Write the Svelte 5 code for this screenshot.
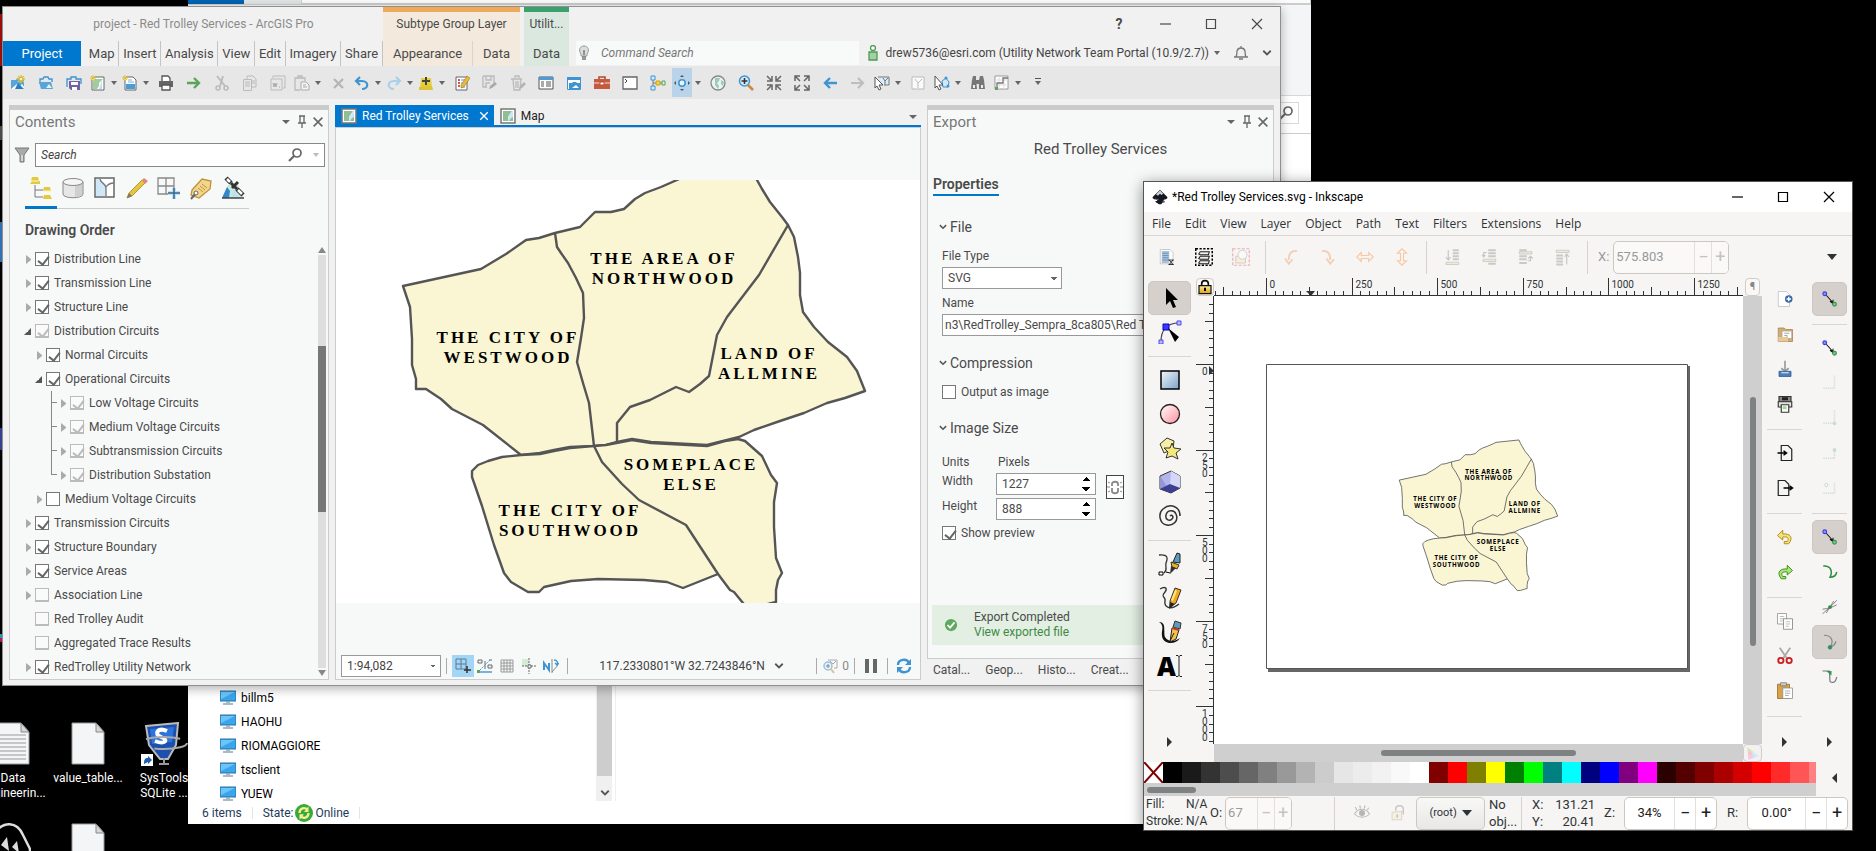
<script>
  // ArcGIS ribbon
  const tabs = ['Map', 'Insert', 'Analysis', 'View', 'Edit', 'Imagery', 'Share'];

  // 16x16 glyphs
  const icons = {
    newProject: '<path d="M1 5h5l1-2h3v2h4v9H1z" fill="#56a5dd"/><path d="M1 14l6-5 3 2 2-2 2 3v2z" fill="#fff"/><path d="M8 8l6 6H5z" fill="#2b7dbb"/><path d="M11 0v8M7 4h8M8 1l6 6M14 1L8 7" stroke="#e3c53f" stroke-width="1.4"/><circle cx="11" cy="4" r="2" fill="#fdf3b5" stroke="#c9a92b"/>',
    open: '<path d="M2 9V4h3l1-2h4l1 2h3v3" fill="none" stroke="#3f92cf" stroke-width="1.3"/><path d="M1 7h12l2 7H3z" fill="#56a5dd"/><path d="M8 13l3-4 3 4z" fill="#e8f3e0"/>',
    saveProject: '<path d="M1 12V4h4V2h5v2h5v5" fill="none" stroke="#3f92cf" stroke-width="1.3"/><path d="M3 6h11v9H5l-2-2z" fill="#6f63a8"/><path d="M5 7h7v3H5zM6 12h5v3H6z" fill="#fff"/>',
    newMap: '<path d="M4 2h10v13H2V5" fill="#fff" stroke="#666"/><path d="M4 4h9l-4 4v3l-2 3H3V7z" fill="#a2cca0"/><path d="M12 5v9H9z" fill="#bfdff3"/><path d="M3 0v6M0 3h6M1 1l4 4M5 1L1 5" stroke="#dfbd31"/>',
    newReport: '<path d="M4 2h7l3 3v10H3V5" fill="#fff" stroke="#666"/><path d="M6 5h4M6 7h6" stroke="#7bb3df"/><path d="M4 9h9v5H4z" fill="#4b9cd6"/><path d="M3 0v6M0 3h6M1 1l4 4M5 1L1 5" stroke="#dfbd31"/>',
    print: '<path d="M4 6V1h6l2 2v3" fill="#fff" stroke="#555" stroke-width="1.3"/><path d="M1 6h14v6h-3v-2H4v2H1z" fill="#666"/><path d="M4 10h8v5H4z" fill="#fff" stroke="#555" stroke-width="1.3"/>',
    go: '<path d="M1 8h12M8 3l5 5-5 5" fill="none" stroke="#5aa55a" stroke-width="2.4"/>',
    cut: '<path d="M3 1l8 10M9 1L6 11" stroke="#b9b9b9" stroke-width="1.8"/><circle cx="4" cy="13" r="2" fill="none" stroke="#b9b9b9" stroke-width="1.5"/><circle cx="12" cy="13" r="2" fill="none" stroke="#b9b9b9" stroke-width="1.5"/>',
    copy: '<path d="M5 4V1h6l3 3v8h-4" fill="none" stroke="#bbb"/><path d="M1.500 4.500h8v11h-8zM3 7h5M3 9h5M3 11h5M10 6h3M10 8h3" fill="none" stroke="#bbb"/>',
    copyPath: '<path d="M3 3V1h12v12h-2M1 4h11v11H1z" fill="none" stroke="#bbb"/><path d="M3 8l1 4 1-4 1 4 1-4M9 12h1" fill="none" stroke="#aaa"/>',
    paste: '<path d="M6 15H1V3h10v3M4 3V1h4v2" fill="none" stroke="#bbb" stroke-width="1.3"/><path d="M7 7h5l3 3v5H7zM9 10h3M9 12h4" fill="#f3f3f3" stroke="#aaa"/>',
    del: '<path d="M4 4l9 9M13 4l-9 9" stroke="#b5b5b5" stroke-width="2.200"/>',
    undo: '<path d="M6 2L2 6l4 4M2 6h6c7 0 7 8 0 8" fill="none" stroke="#3f94d2" stroke-width="2.200"/>',
    redo: '<path d="M10 2l4 4-4 4M14 6H8c-7 0-7 8 0 8" fill="none" stroke="#a9d0ea" stroke-width="2.200"/>',
    addData: '<path d="M3 3h10l1 9c-4-2-7 3-12 2z" fill="#e6cf3c"/><path d="M1 12c4 0 8-3 13-1l1 4H1z" fill="#dfc435"/><path d="M8 2v8M4 6h8" stroke="#444" stroke-width="2"/>',
    attributes: '<path d="M2 2h11v13H2z" fill="#fff" stroke="#666"/><path d="M4 5h2M4 8h2M4 11h2" stroke="#d9534f" stroke-width="2"/><path d="M7 5h4M7 8h3M7 12h4" stroke="#4b9cd6"/><path d="M7 10l6-9 3 2-6 9-3 1z" fill="#e8b93a" stroke="#8b6d24" stroke-width=".5"/>',
    saveEdits: '<path d="M1 1h11v7M1 1v11h4M4 1v4h5V1M4 12V8h4" fill="none" stroke="#bbb" stroke-width="1.4"/><path d="M7 14l1-3 5-4 2 2-5 4z" fill="#aaa"/>',
    discard: '<path d="M1 4h11M3 4l1 11h6l1-11M5 3V1h4v2M6 6v7M8 6v7" fill="none" stroke="#bbb" stroke-width="1.3"/><path d="M9 14l1-3 4-4 2 2-4 4z" fill="#b3b3b3"/>',
    table: '<path d="M1 2h14v12H1z" fill="#fff" stroke="#555"/><path d="M1 2h14v3H1z" fill="#4b9cd6"/><path d="M3 7h3M3 9h3M3 11h3M8 7h5M8 9h5M8 11h5" stroke="#555"/>',
    catalog: '<path d="M1.500 2.500h13v12h-13z" fill="#fff" stroke="#3f94d2"/><path d="M1 2h14v3H1z" fill="#3f94d2"/><path d="M3 8h3l1-1h3l1 1h3v6H3z" fill="#3f94d2"/><path d="M6 13l4-3 3 3z" fill="#fff"/>',
    toolbox: '<path d="M5 4V2h6v2" fill="none" stroke="#b84a2e" stroke-width="1.600"/><path d="M0 4h16v10H0z" fill="#c65a3c"/><path d="M0 8h16" stroke="#f6ded6"/><path d="M6 7h4v3H6z" fill="#fff" stroke="#b84a2e"/>',
    python: '<path d="M1 2h14v12H1z" fill="#fff" stroke="#666" stroke-width="1.3"/><path d="M3 4l2 2-2 2" fill="none" stroke="#444"/>',
    model: '<path d="M3 3v10M3 8h10" stroke="#777"/><path d="M1 1h4v4H1zM1 11h4v4H1z" fill="#d5ecfb" stroke="#3f94d2"/><path d="M6 6h4v4H6z" fill="#f0d23d" stroke="#c8a51d"/><path d="M12 6h3v4h-3z" fill="#d9efd9" stroke="#5aa55a"/>',
    explore: '<circle cx="8" cy="8" r="3.200" fill="#e8f5ff" stroke="#3f94d2" stroke-width="1.500"/><path d="M8 0l2 2H6zM8 16l2-2H6zM0 8l2-2v4zM16 8l-2-2v4z" fill="#555"/>',
    globe: '<circle cx="8" cy="8" r="7" fill="#e6f3fb" stroke="#888" stroke-width="1.300"/><path d="M5 3l5 0-1 3-2 2 2 3-1 3-3-4 0-3z" fill="#9fcbab"/><path d="M11 5l3 2-1 4-2-2z" fill="#9fcbab"/>',
    zoomIn: '<circle cx="6.500" cy="6" r="5" fill="#d5ecfb" stroke="#3f94d2" stroke-width="1.500"/><path d="M6.500 3v6M3.500 6h6" stroke="#333" stroke-width="1.600"/><path d="M10 10l5 5" stroke="#c98a3d" stroke-width="2.600"/>',
    fixedIn: '<path d="M1 1l4 4M6 1v5H1M15 1l-4 4M10 1v5h5M1 15l4-4M1 10h5v5M15 15l-4-4M10 15v-5h5" fill="none" stroke="#666" stroke-width="1.500"/>',
    fixedOut: '<path d="M1 1l5 5M1 6V1h5M15 1l-5 5M10 1h5v5M1 15l5-5M1 10v5h5M15 15l-5-5M10 15h5v-5" fill="none" stroke="#666" stroke-width="1.500"/>',
    prev: '<path d="M15 8H3M8 3L3 8l5 5" fill="none" stroke="#3f94d2" stroke-width="2.400"/>',
    next: '<path d="M1 8h12M8 3l5 5-5 5" fill="none" stroke="#bdbdbd" stroke-width="2.200"/>',
    select: '<path d="M4 2h11v8h-5" fill="#d8eefa" stroke="#777"/><path d="M9 3l2 3 3-3M11 6v4" fill="none" stroke="#777"/><path d="M1 2l8 8H5l2 4-2 1-2-4-2 2z" fill="#fff" stroke="#555"/>',
    clear: '<path d="M2 2h12v12H2z" fill="#fafafa" stroke="#bbb"/><path d="M5 4l3 4 4-4M8 8v5" fill="none" stroke="#bbb"/>',
    trace: '<path d="M8 6l4-3 3 4-1 5H9z" fill="#cfe7f7" stroke="#3f94d2"/><circle cx="12" cy="3" r="1.500" fill="#3f94d2"/><circle cx="14" cy="11" r="1.500" fill="#3f94d2"/><path d="M1 1l8 9H5l2 4-2 1-2-4-2 2z" fill="#fff" stroke="#555"/>',
    locate: '<path d="M3 1h3v4l1 9H1l1-9zM10 1h3l1 4 1 9H9V5zM6 5h4v4H6z" fill="#777"/><path d="M3 10h2v3H3zM11 10h2v3h-2z" fill="#eee"/>',
    chart: '<path d="M1 1h13v13H1z" fill="#fff" stroke="#999"/><path d="M5 1v13M10 1v13M1 5h13M1 10h13" stroke="#ddd"/><path d="M3 13V8h6V3h5" fill="none" stroke="#777" stroke-width="1.300"/><path d="M1 12h3v3H1z" fill="#5aa55a"/>',
    pin: '<path d="M5 2h6M6 2v7M10 2v7M4 9h8M8 9v5" fill="none" stroke="#666" stroke-width="1.300"/>',
    close: '<path d="M3 3l10 10M13 3L3 13" stroke="currentColor" stroke-width="1.800"/>',
    min: '<path d="M3 8h11" stroke="currentColor" stroke-width="1.200"/>',
    max: '<path d="M3.500 3.500h9v9h-9z" fill="none" stroke="currentColor" stroke-width="1.200"/>',
    exit: '<path d="M3 3l10 10M13 3L3 13" stroke="currentColor" stroke-width="1.200"/>',
    filter: '<path d="M1 1h14L10 8v7H6V8z" fill="#aaa" stroke="#777"/><path d="M8 8v6" stroke="#fff"/>',
    search: '<circle cx="10" cy="6" r="4" fill="none" stroke="#666" stroke-width="1.700"/><path d="M7 9l-5 5" stroke="#666" stroke-width="2.200"/>',
    bulb: '<path d="M5 9C2 5 4 1 8 1s6 4 3 8v2H5z" fill="#ddd" stroke="#999"/><path d="M6 12h4M6 14h4M8 5v5" stroke="#777" stroke-width="1.500"/>',
    user: '<circle cx="8" cy="3" r="2.500" fill="#fff" stroke="#4d9a52" stroke-width="1.300"/><path d="M4 7h8v8H4z" fill="#a5cfa7" stroke="#4d9a52" stroke-width="1.300"/>',
    bell: '<path d="M1 12h14M3 12c1-2 1-4 1-6 1-4 7-4 8 0 0 2 0 4 1 6M6 14h4M8 1v2" fill="none" stroke="#777" stroke-width="1.300"/>',
    chevron: '<path d="M3 5l5 5 5-5" fill="none" stroke="#555" stroke-width="2.400"/>',
    map: '<path d="M1 1h14v14H1z" fill="#fff" stroke="#777" stroke-width="1.500"/><path d="M3 3h9l-4 6v4H3z" fill="#8fbf94"/><path d="M12 3h1v10H8V9z" fill="#cde7f6"/><path d="M11 10l2-1v4h-4z" fill="#8fbf94"/>',
    grid: '<path d="M2 2h12v12H2zM5 2v12M8 2v12M11 2v12M2 5h12M2 8h12M2 11h12" fill="none" stroke="#999"/>',
    cells: '<path d="M1 1h10v10H1zM6 1v10M1 6h10" fill="none" stroke="#5b7c93"/><path d="M12 8v7M9 12h7" stroke="#333" stroke-width="1.500"/>',
    snapping: '<path d="M1 2h4v3H1zM12 2h3M11 7h4v3h-4zM8 3v8" fill="none" stroke="#666"/><path d="M3 12L13 2" stroke="#4b9cd6" stroke-dasharray="2 1"/><path d="M1 14h14" stroke="#4b9cd6" stroke-width="1.500"/><path d="M0 12h3v3H0z" fill="#5aa55a"/>',
    crosshair: '<path d="M1 1h7v7H1z" fill="#d7ead5"/><path d="M8 0v16M1 8h15" stroke="#666" stroke-dasharray="2 1"/><path d="M7 7h3v3H7z" fill="#fff" stroke="#666"/>',
    north: '<path d="M1 12V5l5 7V5" fill="none" stroke="#3f94d2" stroke-width="2"/><path d="M9 1v14M9 14l6-7" stroke="#888"/><path d="M11 2c3 0 4 2 3 5M12 5l2 2 2-2" fill="none" stroke="#3f94d2" stroke-width="1.300"/>',
    zoomSel: '<path d="M6 2h9v8h-3M8 3l3 3 3-3" fill="none" stroke="#aaa"/><circle cx="6" cy="8" r="4" fill="#e7f2fa" stroke="#9ac3e0" stroke-width="1.500"/><path d="M6 6v4M4 8h4" stroke="#888"/><path d="M9 11l3 4" stroke="#dfbf93" stroke-width="2"/>',
    pause: '<path d="M2 1h4v14H2zM10 1h4v14h-4z" fill="#666"/>',
    refresh: '<path d="M2 7c0-6 9-7 11-2M14 9c0 6-9 7-11 2" fill="none" stroke="#3f94d2" stroke-width="2.400"/><path d="M15 1v6H9zM1 15V9h6z" fill="#3f94d2"/>',
    link: '<path d="M5 7V5c0-3 6-3 6 0v2M5 9v3c0 3 6 3 6 0V9" fill="none" stroke="#888" stroke-width="1.800"/><path d="M1 3l2 1M0 8h3M1 13l2-1M15 3l-2 1M16 8h-3M15 13l-2-1" stroke="#888"/>',
    ok: '<circle cx="8" cy="8" r="7" fill="#5ea960"/><path d="M4 8l3 3 5-6" fill="none" stroke="#fff" stroke-width="2"/>',
    monitor: '<path d="M0 1h16v10H0z" fill="#37a6ee" stroke="#2a6f9e"/><path d="M1 2h14L1 9z" fill="#6fc4f7"/><path d="M6 12h4M3 14h10" stroke="#8da4b5" stroke-width="1.500"/>',
    online: '<circle cx="8" cy="8" r="8" fill="#3aa935"/><path d="M4 8c0-5 5-5 7-3M12 8c0 5-5 5-7 3" fill="none" stroke="#f4ef9a" stroke-width="2"/><path d="M12 2v5H8zM4 14V9h4z" fill="#f4ef9a"/>'
  };

  // 24x24 glyphs
  const big = {
    byOrder: '<path d="M3 1h6l1 4H2zM3 5h8v3H1zM15 11h6l1 4h-8zM15 19h6l2 4h-9z" fill="#e2ca3c"/><path d="M6 9v12h8M6 14h8" fill="none" stroke="#777"/><path d="M2 5h8M14 15h9" stroke="#f8f4cc"/>',
    bySource: '<path d="M2 6v12c0 5 20 5 20 0V6" fill="#e6e6e6" stroke="#888"/><path d="M14 9v12c5 0 7-1 7-3V6z" fill="#cfcfcf"/><ellipse cx="12" cy="6" rx="10" ry="3.500" fill="#f5f5f5" stroke="#888"/>',
    bySelection: '<path d="M2 2h19v19H2z" fill="#fff" stroke="#666" stroke-width="1.500"/><path d="M3 3h4c1 5 6 4 6 9v8H3z" fill="#cfe7f7"/><path d="M7 3c1 5 6 4 6 9v8M13 11c2-3 5-4 8-4" fill="none" stroke="#777" stroke-width="1.300"/>',
    byEditing: '<path d="M2 22l2-5L17 4l3 3L7 20z" fill="#e3c53f" stroke="#b89a2b"/><path d="M17 4l2-2 4 3-3 3z" fill="#dc8a80"/><path d="M2 22l2-5 3 3z" fill="#777"/>',
    bySnapping: '<path d="M1 2h16v16H1zM9 2v16M1 10h16" fill="none" stroke="#888" stroke-width="1.300"/><path d="M17 12v11M11 17h12" stroke="#bfe0f5" stroke-width="4"/><path d="M17 12v11M11 17h12" stroke="#34668a" stroke-width="1.500"/>',
    byLabel: '<path d="M3 14L13 3l9 2-1 8-11 9-8-3z" fill="#f1d78a" stroke="#c2903f" stroke-width="1.300"/><path d="M11 10l5 4M13 8l5 4M9 12l5 4" stroke="#c2903f"/><path d="M2 23l5-6" stroke="#666" stroke-width="2"/><circle cx="7" cy="17" r="2" fill="#fff" stroke="#666"/>',
    byPerception: '<path d="M1 22L7 9h10l6 13z" fill="#c9e8e0"/><path d="M1 22l5-11 3 4-1 7z" fill="#2f88c9"/><path d="M10 22l3-9 5 9z" fill="#bfdff3"/><path d="M1 22h22" stroke="#444" stroke-width="1.500"/><path d="M5 2l5 5M16 13l6 6" stroke="#333" stroke-width="4.500"/><path d="M6 3l3 3M17 14l4 4" stroke="#fff" stroke-width="2.500"/><path d="M10 7l6 6M11 12l6-6" stroke="#333" stroke-width="3"/>',
    selector: '<path d="M8 2v17l4-4 3 7 3-1-3-7h5z" fill="#000"/>',
    node: '<path d="M3 22C3 10 8 3 21 3" fill="none" stroke="#444" stroke-width="1.200"/><path d="M5 4h6v6H5z" fill="#3a3aff" stroke="#0000c8"/><path d="M19 1h4v4h-4zM1 20h4v4H1z" fill="#b9b9ff" stroke="#4b4bf0"/><path d="M10 8l11 9-4 5z" fill="#000"/>',
    rect: '<path d="M3 3h18v18H3z" fill="url(#blue)" stroke="#000" stroke-width="1.500"/>',
    circle: '<circle cx="12" cy="12" r="9.500" fill="url(#pink)" stroke="#222" stroke-width="1.300"/>',
    star: '<path d="M2 8l7-6 7 3-1 8-9 4z" fill="#f7efa5" stroke="#333"/><path d="M14 7l2 5 7 1-5 4 2 6-6-3-6 2 2-6-4-4h6z" fill="#f5e97e" stroke="#333"/>',
    cube: '<path d="M2 6l11-5 9 5v12l-9 5-11-4z" fill="#b3b6ea" stroke="#333"/><path d="M2 6l8 12-8 1z" fill="#9295d8"/><path d="M13 1l9 5v12l-10-3z" fill="#d5d7f8"/><path d="M12 14l10 4-9 5-11-4z" fill="#3c3f8f"/>',
    spiral: '<path d="M12 12c2-2 4 1 2 3-3 3-7 0-6-4 1-5 8-6 10-1 3 7-3 12-9 11C1 20 0 9 5 5 12-1 22 2 22 12" fill="none" stroke="#333" stroke-width="1.500"/>',
    pen: '<path d="M1 3c9-1 9 3 7 8-1 4 2 7-2 10" fill="none" stroke="#333" stroke-width="1.300"/><path d="M1 20h4v3H1zM8 20l4 1" fill="#fff" stroke="#000"/><path d="M15 10l4-9 3 1v9z" fill="#5b9bbd" stroke="#222"/><path d="M13 10l8 3-2 4-5-2z" fill="#eab21e" stroke="#333"/><path d="M13 14l5 2-6 6z" fill="#333"/>',
    pencil: '<path d="M2 3c5-3 8-1 5 3-5 6 1 4 0 9-1 6 5 10 14 3" fill="none" stroke="#333" stroke-width="1.400"/><path d="M12 15l5-13 6 2-5 13-6 4z" fill="#f3a51d" stroke="#333"/><path d="M13 14l4-10 2 1-4 10z" fill="#ffe77a"/><path d="M12 16l5 2-6 5z" fill="#222"/>',
    calligraphy: '<path d="M1 2c8 0 4 10 6 15 2 4 8 6 15 1-4 7-17 7-18-2C3 10 7 6 1 2z" fill="#111"/><path d="M15 7l2-6 6 2-1 6z" fill="#5b9bbd" stroke="#333"/><path d="M14 8l7 2-3 9-6 3z" fill="#f3c44d" stroke="#222"/><path d="M14 8l7 2" stroke="#c0392b" stroke-width="2"/><path d="M16 13l-4 8" stroke="#222"/>',
    docProps: '<path d="M3 2h13l4 4v15H3z" fill="#fff" stroke="#bbb"/><path d="M5 4h10v16H5z" fill="#a9c3dd"/><path d="M6 7h8M6 10h8M6 13h8M6 16h8" stroke="#5f83a8"/><path d="M14 16h7M14 22h7M15 16l5 6M20 16l-5 6" stroke="#000"/>',
    allLayers: '<path d="M1 1h22v22H1z" fill="none" stroke="#000" stroke-width="2" stroke-dasharray="3 2"/><path d="M5 8l2-3h12l-1 4H7zM5 14l2-3h12l-1 4H7zM5 20l2-3h12l-1 4H7z" fill="#eee" stroke="#222" stroke-width="1.400"/>',
    deselect: '<g opacity=".45"><path d="M1 1h22v22H1z" fill="none" stroke="#e06060" stroke-width="1.600" stroke-dasharray="4 2"/><path d="M5 11h13v9H5z" fill="#f7e6b5" stroke="#888"/><circle cx="14" cy="9" r="6" fill="#fff" stroke="#888"/></g>',
    rotL: '<path d="M20 4C12 3 9 8 9 16M4 14l5 7 5-6" fill="none" stroke="#f3cdb4" stroke-width="2.500"/>',
    rotR: '<path d="M4 4c8-1 11 4 11 12M10 14l5 7 5-6" fill="none" stroke="#f3cdb4" stroke-width="2.500"/>',
    flipH: '<path d="M7 6l-6 6 6 6v-4h10v4l6-6-6-6v4H7z" fill="#fdf3ea" stroke="#f3c9a8" stroke-width="1.500"/>',
    flipV: '<path d="M6 7l6-6 6 6h-4v10h4l-6 6-6-6h4V7z" fill="#fdf3ea" stroke="#f3c9a8" stroke-width="1.500"/>',
    bottom: '<path d="M13 3h8M13 7h8M13 11h8M13 15h8" stroke="#c9c9c7" stroke-width="2.500"/><path d="M4 19h17v3H4z" fill="#ecebdc" stroke="#c4c3ba"/><path d="M7 3v12M4 12l3 4 3-4" fill="none" stroke="#c4c4c4" stroke-width="1.500"/>',
    lower: '<path d="M11 3h10M11 7h10M11 11h10M11 21h10" stroke="#c9c9c7" stroke-width="2.500"/><path d="M4 15h17v3H4z" fill="#ecebdc" stroke="#c4c3ba"/><path d="M9 6H5v5M3 9l2 3 2-3" fill="none" stroke="#c4c4c4" stroke-width="1.500"/>',
    raise: '<path d="M3 3h10M3 11h10M3 15h10M3 20h10" stroke="#c9c9c7" stroke-width="2.500"/><path d="M3 5h17v3H3z" fill="#ecebdc" stroke="#c4c3ba"/><path d="M14 17h4v-5M15 14l3-3 3 3" fill="none" stroke="#c4c4c4" stroke-width="1.500"/>',
    top: '<path d="M3 10h9M3 14h9M3 18h9M3 22h9" stroke="#c9c9c7" stroke-width="2.500"/><path d="M3 3h17v3H3z" fill="#ecebdc" stroke="#c4c3ba"/><path d="M17 22V9M14 12l3-4 3 4" fill="none" stroke="#c4c4c4" stroke-width="1.500"/>',
    newDoc: '<path d="M3 2h11l4 4v16H3z" fill="#fff" stroke="#bbb"/><circle cx="17" cy="12" r="5" fill="#3468a8"/><path d="M17 9v6M14 12h6" stroke="#fff" stroke-width="1.800"/>',
    folder: '<path d="M3 4h8l2 2h9v16H3z" fill="#d0ae7b" stroke="#a68046"/><path d="M8 8h13v10H8z" fill="#fff" stroke="#a9a08d"/><path d="M11 11h7M11 14h4" stroke="#888"/><path d="M3 16h10l3-3v9H3z" fill="#e6c997"/>',
    save: '<path d="M12 1v12M7 11l5 4 5-4" fill="none" stroke="#999" stroke-width="2.200"/><path d="M4 15h16v7H4z" fill="#4a7ebb" stroke="#2f5a8c"/><path d="M7 17h10" stroke="#d7e5f5" stroke-width="1.500"/>',
    printer: '<path d="M4 2h16v7H4z" fill="#888" stroke="#333" stroke-width="1.500"/><path d="M8 3h8v4H8z" fill="#222"/><path d="M3 9h18v7H3z" fill="#e5e5e0" stroke="#333" stroke-width="1.500"/><path d="M7 13h10v10H7z" fill="#fff" stroke="#333" stroke-width="1.500"/><path d="M9 15h5v4H9z" fill="#a5d394"/>',
    importDoc: '<path d="M7 2h9l5 5v15H7z" fill="#f5f5f2" stroke="#222" stroke-width="1.600"/><path d="M2 12h11M10 9l4 3-4 3" fill="none" stroke="#000" stroke-width="2"/>',
    exportDoc: '<path d="M3 2h9l5 5v15H3z" fill="#f5f5f2" stroke="#222" stroke-width="1.600"/><path d="M10 12h11M18 9l4 3-4 3" fill="none" stroke="#000" stroke-width="2"/>',
    undoY: '<path d="M9 3l-7 7 7 6v-4c7-1 9 2 6 6h-4v3h6c7-9 1-14-8-13z" fill="#f6e27c" stroke="#b08d16" stroke-width="1.300"/>',
    redoG: '<path d="M15 3l7 7-7 6v-4c-7-1-9 2-6 6h4v3H7C0 12 6 7 15 8z" fill="#a9e676" stroke="#3e8f1b" stroke-width="1.300"/>',
    copyDoc: '<path d="M2 2h12v14H2z" fill="#fff" stroke="#888"/><path d="M5 6h6M5 9h6M5 12h4" stroke="#aaa"/><path d="M10 9h12v14H10z" fill="#fff" stroke="#777"/><path d="M13 13h6M13 16h6M13 19h4" stroke="#aaa"/>',
    scissors: '<path d="M5 1l10 15M19 1L9 16" stroke="#aaa" stroke-width="2.500"/><circle cx="6.500" cy="18" r="3.500" fill="none" stroke="#cc1f1f" stroke-width="2.500"/><circle cx="17.500" cy="18" r="3.500" fill="none" stroke="#cc1f1f" stroke-width="2.500"/>',
    clipboard: '<path d="M2 3h16v19H2z" fill="#d8a24a" stroke="#96671a"/><path d="M6 1h8v4H6z" fill="#ccc" stroke="#777"/><path d="M9 8h13v14H9z" fill="#fff" stroke="#888"/><path d="M12 12h7M12 15h7M12 18h5" stroke="#999"/>',
    snap: '<path d="M7 7l9 10M12 15l4 3v-5" fill="none" stroke="#111" stroke-width="1.400"/><circle cx="5" cy="5" r="2.500" fill="#8f8ff5" stroke="#3c3ce0" stroke-width="1.500"/><circle cx="18" cy="19" r="2.500" fill="#8bbd9b" stroke="#2f9a47" stroke-width="1.500"/>',
    corner: '<path d="M3 19h15V2" fill="none" stroke="#d2e5d6" stroke-width="2" stroke-dasharray="2 1"/>',
    cornerDot: '<path d="M3 19h15V2" fill="none" stroke="#dadedb" stroke-width="2" stroke-dasharray="2 1"/><circle cx="18" cy="19" r="2.500" fill="#c3dfca"/>',
    edgeDot: '<path d="M3 19h15V5" fill="none" stroke="#dadedb" stroke-width="2" stroke-dasharray="2 1"/><circle cx="18" cy="8" r="2.500" fill="#c3dfca"/>',
    centerDot: '<path d="M3 19h15V5" fill="none" stroke="#dadedb" stroke-width="2" stroke-dasharray="2 1"/><circle cx="7" cy="8" r="2" fill="#fff" stroke="#c3dfca" stroke-width="1.500"/>',
    pathG: '<path d="M3 4c10-1 13 7 9 15 5 0 8-2 9-7" fill="none" stroke="#2f8f3e" stroke-width="2"/>',
    intersect: '<path d="M2 21C8 16 14 11 21 3M2 15c8-1 14-3 19-6M7 20l10-16" fill="none" stroke="#777" stroke-width="1.200"/><circle cx="12" cy="12" r="2.500" fill="#2f8f3e"/>',
    cusp: '<path d="M4 3c10 0 13 7 9 15 4-1 6-3 7-7" fill="none" stroke="#888" stroke-width="1.600"/><circle cx="12" cy="19" r="2.500" fill="#3c7d8f" stroke="#2f9a47"/>',
    smooth: '<path d="M2 4h9c2 8-1 15 3 15 4 1 6-2 7-7" fill="none" stroke="#777" stroke-width="1.600"/><path d="M7 4h7v6z" fill="#2f9a47"/>',
    eye: '<path d="M2 13c5-8 15-8 20 0-5 6-15 6-20 0zM5 8L3 4M10 6L9 2M15 6l1-4M19 8l2-3" fill="none" stroke="#bbb" stroke-width="1.500"/><circle cx="12" cy="12" r="4" fill="#b5b5b5"/>',
    unlock: '<path d="M9 9V6c0-5 10-5 10 0v8" fill="none" stroke="#c9c8c5" stroke-width="2"/><path d="M4 11l13-1v11H4z" fill="#f4f1e2" stroke="#cfccc2"/><path d="M11 14v4" stroke="#bbb" stroke-width="2"/>',
    lock: '<path d="M7 11V7c0-6 10-6 10 0v4" fill="none" stroke="#111" stroke-width="2.500"/><path d="M3 10h18v12H3z" fill="url(#gold)" stroke="#111" stroke-width="1.800"/><path d="M12 13v5" stroke="#000" stroke-width="3"/>',
    inkscape: '<path d="M12 1l11 11c1 4-5 3-6 5 1 2 3 1 2 3-2 1-4 0-5 3h-4c0-2-4-2-5-4 1-2 3 0 3-2C6 15 0 16 1 12z" fill="#16181f"/><path d="M12 2l5 5-3 2-2-2-3 3-3-2z" fill="#c9ced9"/><path d="M4 15l6 1M15 20l4-2" stroke="#8c93a3"/>'
  };

  const toolbar = [
    ['newProject'], ['open'], ['saveProject'], ['newMap', 1], ['newReport', 1], ['print'], ['go'], ['cut'], ['copy'],
    ['copyPath'], ['paste', 1], ['del'], ['undo', 1], ['redo', 1], ['addData', 1], ['attributes'], ['saveEdits'],
    ['discard'], ['table'], ['catalog'], ['toolbox'], ['python'], ['model'], ['explore', 1], ['globe'], ['zoomIn'],
    ['fixedIn'], ['fixedOut'], ['prev'], ['next'], ['select', 1], ['clear'], ['trace', 1], ['locate'], ['chart', 1]
  ];

  const views = ['byOrder', 'bySource', 'bySelection', 'byEditing', 'bySnapping', 'byLabel', 'byPerception'];

  // level, name, checked, dimmed, expander
  const layers = [
    [0, 'Distribution Line', true, false, 'closed'],
    [0, 'Transmission Line', true, false, 'closed'],
    [0, 'Structure Line', true, false, 'closed'],
    [0, 'Distribution Circuits', true, true, 'open'],
    [1, 'Normal Circuits', true, false, 'closed'],
    [1, 'Operational Circuits', true, false, 'open'],
    [2, 'Low Voltage Circuits', true, true, 'closed'],
    [2, 'Medium Voltage Circuits', true, true, 'closed'],
    [2, 'Subtransmission Circuits', true, true, 'closed'],
    [2, 'Distribution Substation', true, true, 'closed'],
    [1, 'Medium Voltage Circuits', false, false, 'closed'],
    [0, 'Transmission Circuits', true, false, 'closed'],
    [0, 'Structure Boundary', true, false, 'closed'],
    [0, 'Service Areas', true, false, 'closed'],
    [0, 'Association Line', false, true, 'closed'],
    [0, 'Red Trolley Audit', false, true, ''],
    [0, 'Aggregated Trace Results', false, true, ''],
    [0, 'RedTrolley Utility Network', true, false, 'closed']
  ];

  // Service areas
  const areas = [
    'M403 286L481 269 506 254 526 240 539 238 555 233 580 227 595 212 611 212 624 209 635 199 645 193 661 187 677 180 685 176 752 169 757 180 762 189 770 202 782 217 788 225 794 237 798 257 800 273 800 295 803 312 814 327 828 342 847 357 857 371 865 391 845 398 827 403 804 413 780 421 754 430 739 437 707 445 651 442 632 439 617 442 606 445 594 446 570 447 554 450 540 453 521 455 483 425 452 409 441 399 426 389 416 389 416 379 412 365 412 339 410 307z',
    'M521 455L502 457 488 461 478 465 472 471 472 477 482 506 494 545 504 573 511 582 528 592 539 592 544 587 571 581 598 579 644 580 667 582 683 588 718 574 730 590 734 592 743 603 747 608 756 608 768 604 776 602 776 590 778 580 782 573 776 558 774 527 774 502 777 483 771 475 762 456 745 441 738 439 725 441 707 446 651 443 632 440 606 445 594 446 570 448 554 451 540 454z'
  ];
  const borders = [
    'M555 233L557 247 561 253 568 263 576 278 583 293 584 318 581 338 577 362 583 383 589 403 594 446',
    'M788 225L759 275 727 317 717 335 709 376 700 384 689 392 676 387 650 400 630 407 617 423 617 442',
    'M594 446L597 452 602 462 622 484 639 500 686 525 718 574'
  ];
  const labels = [
    [664, 264, 'THE AREA OF', 'NORTHWOOD'],
    [508, 343, 'THE CITY OF', 'WESTWOOD'],
    [769, 359, 'LAND OF', 'ALLMINE'],
    [691, 470, 'SOMEPLACE', 'ELSE'],
    [570, 516, 'THE CITY OF', 'SOUTHWOOD']
  ];

  // Inkscape
  const menus = ['File', 'Edit', 'View', 'Layer', 'Object', 'Path', 'Text', 'Filters', 'Extensions', 'Help'];
  const controls = ['docProps', 'allLayers', 'deselect', '', 'rotL', 'rotR', 'flipH', 'flipV', '', 'bottom', 'lower', 'raise', 'top', ''];
  const tools = ['selector', 'node', '', 'rect', 'circle', 'star', 'cube', 'spiral', '', 'pen', 'pencil', 'calligraphy', 'text', ''];
  const commands = ['newDoc', 'folder', 'save', 'printer', '', 'importDoc', 'exportDoc', '', 'undoY', 'redoG', '', 'copyDoc', 'scissors', 'clipboard', ''];
  const snaps = ['snap', '', 'snap', 'corner', 'cornerDot', 'edgeDot', 'centerDot', '', 'snap', 'pathG', 'intersect', 'cusp', 'smooth'];
  const snapsOn = [0, 8, 11];
  const palette = ['#000', '#1a1a1a', '#333', '#4d4d4d', '#666', '#808080', '#999', '#b3b3b3', '#ccc', '#e6e6e6', '#ececec',
    '#f2f2f2', '#f9f9f9', '#fff', '#800000', '#f00', '#808000', '#ff0', '#008000', '#0f0', '#008080', '#0ff', '#000080', '#00f',
    '#800080', '#f0f', '#2b0000', '#500', '#800000', '#a00', '#d40000', '#f00', '#ff2a2a', '#f55', '#ff8080', '#faa'];

  // ruler ticks: every 25 units, longer at 125 and 250
  function ticks(origin, from, to) {
    const list = [];
    for (let i = from; i <= to; i++) {
      list.push({
        pos: Math.round(origin + i * 8.56) + 0.5,
        len: i % 10 === 0 ? 18 : i % 5 === 0 ? 9 : 5,
        label: i % 10 === 0 && i >= 0 ? String(i * 25) : ''
      });
    }
    return list;
  }
  const hTicks = ticks(52, -6, 55);
  const vTicks = ticks(68, -7, 44);

  const hosts = ['billm5', 'HAOHU', 'RIOMAGGIORE', 'tsclient', 'YUEW'];

  let scale = $state('1:94,082');
  let format = $state('SVG');
  let exportName = $state('n3\\RedTrolley_Sempra_8ca805\\Red Trolley Services.svg');
  let imageWidth = $state('1227');
  let imageHeight = $state('888');
  let tool = $state('selector');
</script>

{#snippet icon(name, size = 16)}
  <svg class="icon" width={size} height={size} viewBox="0 0 16 16" fill="none" aria-hidden="true">{@html icons[name]}</svg>
{/snippet}

{#snippet icon24(name, size = 24)}
  <svg class="icon" width={size} height={size} viewBox="0 0 24 24" fill="none" aria-hidden="true">{@html big[name]}</svg>
{/snippet}

{#snippet paneButtons()}
  <button aria-label="Options"><i class="caret wide"></i></button>
  <button aria-label="Auto hide">{@render icon('pin')}</button>
  <button aria-label="Close">{@render icon('close', 14)}</button>
{/snippet}

{#snippet paper(lined)}
  <svg class="icon" width="34" height="44" viewBox="0 0 34 44" aria-hidden="true">
    <path d="M1 1h24l8 9v32H1z" fill="#f4f5f7" stroke="#999" />
    <path d="M25 1v9h8z" fill="#d5d8da" stroke="#888" />
    {#if lined}
      <path d="M1 13h29M1 17h29M1 21h29M1 25h29M1 29h29M1 33h29M1 37h29" stroke="#999" />
    {/if}
  </svg>
{/snippet}

<main class="desktop">
  <div class="sliver"><i class="red"></i><i class="gray"></i><i class="blue"></i><i class="indigo"></i><i class="pink"></i></div>

  <div class="shortcuts">
    <div class="shortcut">{@render paper(true)}<span>Data<br />Engineerin...</span></div>
    <div class="shortcut">{@render paper(false)}<span>value_table...</span></div>
    <div class="shortcut">
      <svg class="icon" width="48" height="44" viewBox="0 0 48 44" aria-hidden="true">
        <path d="M6 4l32-3-2 22-8 14h-8L9 23z" fill="#1c4fae" stroke="#bbb" stroke-width="2" />
        <path d="M10 7l24-2-2 15-20 2z" fill="#2e74d8" />
        <path d="M27 9c-9-4-14 3-6 6s4 8-6 4" fill="none" stroke="#fff" stroke-width="4" />
        <ellipse cx="24" cy="21" rx="23" ry="6" fill="none" stroke="#aaa" stroke-width="2" stroke-dasharray="34 22" />
        <path d="M19 42h10M24 36v6" stroke="#999" stroke-width="2" />
        <path d="M1 32h12v12H1z" fill="#fff" />
        <path d="M4 42c0-5 1-6 4-6v-2l4 4-4 4v-2z" fill="#1f5fb0" />
      </svg>
      <span>SysTools<br />SQLite ...</span>
    </div>
    <div class="shortcut">
      <svg class="icon" width="36" height="44" viewBox="0 0 36 44" aria-hidden="true">
        <path d="M0 10C8-2 22-2 28 12l7 14v18H0z" fill="#000" stroke="#ddd" stroke-width="2.5" />
        <path d="M6 22l6-8 2 14zM17 24l5-6 2 12z" fill="#ddd" />
      </svg>
    </div>
    <div class="shortcut">{@render paper(false)}</div>
  </div>

  <!-- File explorer behind everything -->
  <section class="explorer">
    <div class="ex-title"><i></i><span></span></div>
    <div class="ex-ribbon"></div>
    <div class="ex-address"><span>{@render icon('search')}</span></div>
    <div class="ex-body">
      <ul>
        {#each hosts as host}
          <li>{@render icon('monitor')}{host}</li>
        {/each}
      </ul>
      <div class="ex-scroll"><button aria-label="Scroll down">{@render icon('chevron', 12)}</button></div>
    </div>
    <footer>
      <span>6 items</span><i></i><span class="state">State:{@render icon('online', 18)}Online</span><i></i>
    </footer>
  </section>

  <!-- ArcGIS Pro -->
  <section class="arcgis">
    <header class="ribbon">
      <div class="app-title">project - Red Trolley Services - ArcGIS Pro</div>
      <nav class="tabs">
        <button class="project">Project</button>
        {#each tabs as tab}
          <button>{tab}</button>
        {/each}
      </nav>
      <div class="context orange">
        <span>Subtype Group Layer</span>
        <div><button>Appearance</button><button>Data</button></div>
      </div>
      <div class="context green">
        <span>Utilit...</span>
        <div><button>Data</button></div>
      </div>
      <div class="ribbon-right">
        <div class="win-buttons">
          <button aria-label="Help"><b>?</b></button>
          <button aria-label="Minimize">{@render icon('min')}</button>
          <button aria-label="Maximize">{@render icon('max')}</button>
          <button aria-label="Close">{@render icon('exit')}</button>
        </div>
        <div class="account">
          <label class="command">{@render icon('bulb')}<input type="text" placeholder="Command Search" /></label>
          <button class="user">{@render icon('user')}drew5736@esri.com (Utility Network Team Portal (10.9/2.7))<i class="caret"></i></button>
          <button aria-label="Notifications">{@render icon('bell')}</button>
          <button aria-label="Collapse ribbon">{@render icon('chevron', 12)}</button>
        </div>
      </div>
    </header>

    <div class="quick">
      {#each toolbar as [name, split]}
        <button class:split class:on={name === 'explore'} aria-label={name}>{@render icon(name)}</button>
        {#if split}<button class="drop" aria-label="{name} options"><i class="caret"></i></button>{/if}
      {/each}
      <button aria-label="Customize"><i class="caret over"></i></button>
    </div>

    <div class="work">
      <aside class="pane contents">
        <div class="pane-head"><h2>Contents</h2>{@render paneButtons()}</div>
        <div class="find">
          <button aria-label="Filter">{@render icon('filter')}</button>
          <label><input type="text" placeholder="Search" aria-label="Search" />{@render icon('search')}<i class="caret light"></i></label>
        </div>
        <div class="views">
          {#each views as view, i}
            <button class:active={i === 0} aria-label={view}>{@render icon24(view)}</button>
          {/each}
        </div>
        <h3>Drawing Order</h3>
        <div class="tree">
          <div class="rows">
            {#each layers as [level, name, checked, dim, expander], i}
              <div class="row level{level}" class:last={level === 2 && layers[i + 1][0] !== 2}>
                <button class="exp {expander}" aria-label="Expand {name}"></button>
                <label><input type="checkbox" class:dim {checked} />{name}</label>
              </div>
            {/each}
          </div>
          <div class="tree-scroll"><i class="up"></i><div><b></b></div><i class="down"></i></div>
        </div>
      </aside>

      <div class="mapview">
        <div class="map-tabs">
          <button class="current">{@render icon('map')}Red Trolley Services<span>{@render icon('close', 12)}</span></button>
          <button>{@render icon('map')}Map</button>
          <i class="caret wide"></i>
        </div>
        <div class="map-frame">
          <div class="preview">
            <svg viewBox="336 180 584 423" aria-label="Service areas">
              {#each areas as d}<path class="area" {d} />{/each}
              {#each borders as d}<path class="border" {d} />{/each}
              {#each labels as [x, y, first, second]}
                <text class="serif" {x} {y}>{first}</text>
                <text class="serif" {x} y={y + 20}>{second}</text>
              {/each}
            </svg>
          </div>
          <div class="map-status">
            <select aria-label="Scale" bind:value={scale}><option>1:94,082</option></select>
            <i class="bar"></i>
            <button class="on" aria-label="Constraints">{@render icon('cells')}</button>
            <button aria-label="Snapping">{@render icon('snapping')}</button>
            <button aria-label="Grid">{@render icon('grid')}</button>
            <button aria-label="Inference">{@render icon('crosshair')}</button>
            <button aria-label="Corrections">{@render icon('north')}</button>
            <i class="bar"></i>
            <span class="coords">117.2330801°W 32.7243846°N {@render icon('chevron', 12)}</span>
            <i class="bar"></i>
            <span class="count">{@render icon('zoomSel')} 0</span>
            <i class="bar"></i>
            <button aria-label="Pause">{@render icon('pause')}</button>
            <i class="bar"></i>
            <button aria-label="Refresh">{@render icon('refresh')}</button>
          </div>
        </div>
      </div>

      <div class="export-col">
        <aside class="pane export">
          <div class="pane-head"><h2>Export</h2>{@render paneButtons()}</div>
          <p class="subject">Red Trolley Services</p>
          <h4>Properties</h4>
          <div class="form">
            <h5>{@render icon('chevron', 10)}File</h5>
            <label for="format">File Type</label>
            <select id="format" bind:value={format}><option>SVG</option></select>
            <label for="name">Name</label>
            <input id="name" type="text" bind:value={exportName} />
            <h5>{@render icon('chevron', 10)}Compression</h5>
            <label class="check"><input type="checkbox" />Output as image</label>
            <h5 class="size">{@render icon('chevron', 10)}Image Size</h5>
            <div class="dims">
              <div class="fields">
                <span>Units</span><span class="px">Pixels</span>
                <label for="w">Width</label>
                <div class="spin"><input id="w" type="text" bind:value={imageWidth} /><i></i></div>
                <label for="h">Height</label>
                <div class="spin"><input id="h" type="text" bind:value={imageHeight} /><i></i></div>
              </div>
              <button aria-label="Lock ratio">{@render icon('link')}</button>
            </div>
            <label class="check tight"><input type="checkbox" checked />Show preview</label>
          </div>
          <div class="done">
            {@render icon('ok', 14)}
            <p>Export Completed<br /><a href="#exported">View exported file</a></p>
          </div>
        </aside>
        <nav class="pane-tabs">
          {#each ['Catal...', 'Geop...', 'Histo...', 'Creat...', 'Symb...'] as tab}
            <button>{tab}</button>
          {/each}
        </nav>
      </div>
    </div>
  </section>

  <!-- Inkscape -->
  <section class="inkscape">
    <svg width="0" height="0" class="defs" aria-hidden="true">
      <linearGradient id="blue" x2="1" y2="1"><stop stop-color="#f2f7fb" /><stop offset="1" stop-color="#7aa3c8" /></linearGradient>
      <linearGradient id="pink" x2="1" y2="1"><stop stop-color="#fff" /><stop offset="1" stop-color="#ff8f9c" /></linearGradient>
      <linearGradient id="gold" x2="0" y2="1"><stop stop-color="#fff0a0" /><stop offset="1" stop-color="#e09a10" /></linearGradient>
    </svg>
    <header class="ink-title">
      {@render icon24('inkscape', 16)}<span>*Red Trolley Services.svg - Inkscape</span>
      <button aria-label="Minimize">{@render icon('min')}</button>
      <button aria-label="Maximize">{@render icon('max')}</button>
      <button aria-label="Close">{@render icon('exit')}</button>
    </header>
    <nav class="menu">
      {#each menus as item}<button>{item}</button>{/each}
    </nav>
    <div class="controls">
      {#each controls as name}
        {#if name}<button aria-label={name}>{@render icon24(name, 18)}</button>{:else}<i class="vsep"></i>{/if}
      {/each}
      <label for="posx">X:</label>
      <div class="number off"><input id="posx" type="text" value="575.803" disabled /><button disabled>−</button><button disabled>+</button></div>
      <i class="caret dark"></i>
    </div>

    <div class="studio">
      <div class="toolbox">
        {#each tools as name}
          {#if name === 'text'}
            <button class="type" aria-label="Text"><b>A</b><svg class="icon" width="6" height="22" aria-hidden="true"><path d="M0 .5h2l1 1 1-1h2M3 1v20M0 21.500h2l1-1 1 1h2" fill="none" stroke="#222" /></svg></button>
          {:else if name}
            <button class:on={tool === name} aria-label={name} onclick={() => (tool = name)}>{@render icon24(name)}</button>
          {:else}<hr />{/if}
        {/each}
        <i class="more"></i>
      </div>

      <div class="stage">
        <button class="guides" aria-label="Lock guides">{@render icon24('lock', 16)}</button>
        <svg class="hruler" height="18" aria-hidden="true">
          {#each hTicks as t}
            <path d="M{t.pos} {18 - t.len}V18" stroke="#2e3436" />
            {#if t.label}<text x={t.pos + 3} y="10">{t.label}</text>{/if}
          {/each}
          <path d="M92 13h9l-4 5z" fill="#2e3436" />
        </svg>
        <button class="fit" aria-label="Zoom drawing">¶</button>

        <svg class="vruler" width="18" aria-hidden="true">
          {#each vTicks as t}
            <path d="M{18 - t.len} {t.pos}H18" stroke="#2e3436" />
            {#each t.label.split('') as digit, n}<text x="6" y={t.pos + 10 + n * 8}>{digit}</text>{/each}
          {/each}
          <path d="M13 70v9l5-4z" fill="#2e3436" />
        </svg>
        <svg class="canvas" aria-label="Drawing">
          <path d="M54 70h422v306H54z" fill="#666" />
          <path d="M52.500 68.500h421v304h-421z" fill="#fff" stroke="#555" />
          <g transform="translate(47 86) scale(.343)">
            {#each areas as d}<path class="area" {d} />{/each}
            {#each borders as d}<path class="border" {d} />{/each}
            {#each labels as [x, y, first, second]}
              <text class="sans" {x} y={y + 3}>{first}</text>
              <text class="sans" {x} y={y + 23}>{second}</text>
            {/each}
          </g>
        </svg>
        <div class="vscroll"><i></i></div>
        <div class="hscroll"><i></i></div>
        <div class="cms"><i></i></div>
      </div>

      <div class="column">
        {#each commands as name}
          {#if name}<button aria-label={name}>{@render icon24(name, 18)}</button>{:else}<hr />{/if}
        {/each}
        <i class="more"></i>
      </div>
      <div class="column">
        {#each snaps as name, i}
          {#if name}<button class:on={snapsOn.includes(i)} aria-label={name}>{@render icon24(name, 18)}</button>{:else}<hr />{/if}
        {/each}
        <i class="more"></i>
      </div>
    </div>

    <div class="colors">
      <div class="strip">
        <div class="swatches">
          <button class="none" aria-label="None">
            <svg width="19" height="21" aria-hidden="true"><path d="M0 0l19 21M19 0L0 21" stroke="#800000" stroke-width="2" /></svg>
          </button>
          {#each palette as color}<button aria-label={color} style="background: {color}"></button>{/each}
        </div>
        <div class="strip-scroll"><i></i></div>
      </div>
      <i class="more back"></i>
    </div>

    <footer class="ink-status">
      <div class="paint"><span>Fill:</span><span>N/A</span><span>Stroke:</span><span>N/A</span></div>
      <label for="opacity">O:</label>
      <div class="number off small"><input id="opacity" type="text" value="67" disabled /><button disabled>−</button><button disabled>+</button></div>
      <i class="vsep"></i>
      <button class="flat" aria-label="Layer visibility">{@render icon24('eye', 18)}</button>
      <button class="flat" aria-label="Lock layer">{@render icon24('unlock', 18)}</button>
      <button class="layer">(root)<i class="caret dark"></i></button>
      <p>No<br />obj...</p>
      <i class="vsep near"></i>
      <div class="pointer"><span>X:</span><span>131.21</span><span>Y:</span><span>20.41</span></div>
      <label for="zoom">Z:</label>
      <div class="number zoom"><input id="zoom" type="text" value="34%" /><button>−</button><button>+</button></div>
      <label for="rotate">R:</label>
      <div class="number rotate"><input id="rotate" type="text" value="0.00°" /><button>−</button><button>+</button></div>
    </footer>
  </section>
</main>

<style>
  :global(body) {
    background: #000;
  }
  .desktop {
    position: relative;
    height: 100vh;
    overflow: hidden;
    background: #000;
    font-family: Roboto, 'Open Sans', sans-serif;
    font-size: 12px;
    line-height: 16px;
    color: #4a4a4a;
  }
  .desktop * {
    box-sizing: border-box;
  }
  h2, h3, h4, h5, p, ul {
    margin: 0;
    padding: 0;
    font-weight: 400;
  }
  button {
    display: flex;
    align-items: center;
    justify-content: center;
    padding: 0;
    border: 0;
    background: none;
    font: inherit;
    color: inherit;
  }
  input, select {
    font: inherit;
    color: inherit;
    min-width: 0;
    outline: 0;
  }
  .icon {
    display: block;
    flex: none;
  }
  .caret {
    border: 3px solid transparent;
    border-top: 4px solid #666;
    border-bottom: 0;
  }
  .caret.wide {
    border-width: 4px 4px 0;
  }
  .caret.light {
    border-top-color: #bbb;
  }
  .caret.dark {
    border-width: 6px 5px 0;
    border-top-color: #2e3436;
  }

  /* desktop */
  .sliver {
    position: absolute;
    inset: 14px auto 0 0;
    width: 2px;
    display: flex;
    flex-direction: column;
  }
  .sliver i { height: 52px; margin-bottom: 60px; }
  .sliver .red { background: #b01010; }
  .sliver .gray { background: #555; height: 14px; margin-bottom: 82px; }
  .sliver .blue { background: #3b7fd0; height: 40px; margin-bottom: 166px; }
  .sliver .indigo { background: #4148a8; height: 22px; margin-bottom: 184px; }
  .sliver .pink { background: #c41f56; height: 8px; border-top: 4px solid #2fa8d8; }
  .shortcuts {
    position: absolute;
    left: -24px;
    top: 722px;
    display: grid;
    grid-template-columns: 74px 76px 76px;
    grid-template-rows: 101px 101px;
  }
  .shortcut {
    display: flex;
    flex-direction: column;
    align-items: center;
    color: #fff;
    text-align: center;
    line-height: 15px;
  }
  .shortcut span {
    margin-top: 5px;
  }

  /* explorer */
  .explorer {
    position: absolute;
    inset: 0 565px 27px 188px;
    display: flex;
    flex-direction: column;
    background: #fff;
    color: #000;
  }
  .ex-title {
    flex: 0 0 5px;
    display: flex;
    background: #e0e4e4;
    border-bottom: 1px solid #ccc;
  }
  .ex-title i { width: 56px; background: #0063b1; }
  .ex-title span { flex: 1; margin-left: 57px; background: #fafafa; border: 1px solid #ccc; border-top: 0; }
  .ex-ribbon { flex: 0 0 91px; background: #f4f5f7; border-bottom: 1px solid #d5d7da; }
  .ex-address {
    flex: 0 0 38px;
    display: flex;
    justify-content: flex-end;
    align-items: flex-start;
    padding: 6px 12px 0 0;
    border-bottom: 1px solid #ccc;
  }
  .ex-address span { width: 300px; height: 22px; padding: 2px 4px; display: flex; justify-content: flex-end; border: 1px solid #d9d9d9; }
  .ex-body {
    flex: 1;
    min-height: 0;
    display: flex;
    overflow: hidden;
  }
  .ex-body ul {
    width: 409px;
    display: flex;
    flex-direction: column;
    justify-content: flex-end;
    margin-bottom: -5px;
    padding-left: 32px;
    list-style: none;
  }
  .ex-body li {
    display: flex;
    align-items: center;
    gap: 5px;
    height: 24px;
  }
  .ex-scroll {
    width: 18px;
    background: #cdcdcd;
    border-right: 3px solid #fff;
    outline: 1px solid #f0f0f0;
    display: flex;
    flex-direction: column;
    justify-content: flex-end;
  }
  .ex-scroll button { height: 25px; padding-top: 8px; background: #f0f0f0; }
  .explorer footer {
    height: 23px;
    display: flex;
    align-items: center;
    gap: 10px;
    padding: 0 14px 0 14px;
    color: #1e395b;
  }
  .explorer footer i { width: 1px; height: 12px; background: #e5e5e5; }
  .state { display: flex; align-items: center; gap: 2px; }

  /* ArcGIS window */
  .arcgis {
    position: absolute;
    inset: 6px 595px 165px 2px;
    display: flex;
    flex-direction: column;
    background: #f1f1f1;
    border: 1px solid #8f8f8f;
    box-shadow: 0 3px 10px rgba(0, 0, 0, 0.3);
  }
  .ribbon {
    display: grid;
    grid-template-columns: 380px 137px 45px minmax(0, 1fr);
    grid-template-rows: 34px 25px;
    column-gap: 0;
  }
  .app-title {
    padding: 0 55px 0 76px;
    line-height: 34px;
    text-align: center;
    white-space: nowrap;
    color: #8b8b8b;
  }
  .tabs {
    grid-row: 2;
    display: flex;
    font-size: 13px;
  }
  .tabs button {
    flex: 1 1 auto;
    border-right: 1px solid #c4c4c4;
  }
  .tabs .project {
    flex: 0 0 78px;
    border: 0;
    margin-right: 4px;
    background: #0078d0;
    color: #fff;
  }
  .context {
    grid-row: 1 / 3;
    display: flex;
    flex-direction: column;
    text-align: center;
    background: #f3e9dd;
    border-top: 5px solid #f0a95b;
  }
  .context span { line-height: 24px; height: 29px; }
  .context div { flex: 1; display: flex; font-size: 13px; }
  .context button { flex: 1 1 auto; }
  .context button + button { border-left: 1px solid #ddd3c8; }
  .context.green {
    margin: 0 -4px 0 4px;
    background: #dae8df;
    border-color: #3aa06c;
  }
  .ribbon-right {
    grid-column: 4;
    grid-row: 1 / 3;
    padding-left: 11px;
  }
  .win-buttons {
    display: flex;
    justify-content: flex-end;
    height: 34px;
  }
  .win-buttons button { width: 46px; }
  .win-buttons b { font-size: 14px; }
  .account {
    display: flex;
    align-items: center;
    height: 24px;
    color: #444;
  }
  .account > button { width: 26px; height: 24px; }
  .account .user { width: auto; gap: 5px; margin: 0 8px 0 6px; white-space: nowrap; }
  .command {
    flex: 1;
    min-width: 0;
    display: flex;
    align-items: center;
    gap: 9px;
    height: 24px;
    background: #f8fafa;
  }
  .command input { flex: 1; border: 0; padding: 0; background: none; font-style: italic; }
  input::placeholder { color: #777; opacity: 1; }
  .quick {
    display: flex;
    flex: 0 0 33px;
    padding: 2px 0 2px 1px;
    background: #e7e7e7;
  }
  .quick button { flex: 0 0 28px; }
  .quick .split { flex-basis: 20px; }
  .quick .drop { flex-basis: 12px; }
  .quick .on { background: #b9d3ea; }
  .caret.over { position: relative; }
  .caret.over::before { content: ''; position: absolute; left: -3px; top: -7px; width: 6px; height: 1px; background: #555; }

  .work {
    flex: 1;
    min-height: 0;
    display: flex;
    gap: 6px;
    padding: 6px 6px 5px;
  }
  .pane {
    display: flex;
    flex-direction: column;
    background: #f7f9f9;
    border: 1px solid #ccc;
    border-top: 5px solid #cbcbcb;
  }
  .pane-head {
    display: flex;
    height: 23px;
    margin-bottom: 1px;
    align-items: center;
    padding: 0 2px 0 5px;
  }
  .pane-head h2 { flex: 1; font-size: 15px; color: #777; }
  .pane-head button { width: 16px; height: 16px; color: #666; }
  .contents { flex: 0 0 320px; }
  .find {
    display: flex;
    margin: 9px 3px 0 4px;
    gap: 5px;
  }
  .find label {
    flex: 1;
    display: flex;
    align-items: center;
    gap: 10px;
    height: 24px;
    padding: 0 5px;
    background: #fff;
    border: 1px solid #888;
  }
  .find input { flex: 1; border: 0; padding: 0; font-style: italic; }
  .find input::placeholder { color: #444; }
  .views {
    display: flex;
    align-self: flex-start;
    height: 42px;
    margin-left: 15px;
    border-bottom: 1px solid #ccc;
  }
  .views button { width: 32px; }
  .views .active { border-bottom: 3px solid #0078c8; margin-bottom: -1px; padding-top: 2px; }
  h3 {
    margin: 11px 0 7px 15px;
    font-size: 14px;
    line-height: 20px;
    font-weight: 600;
  }
  .tree { flex: 1; display: flex; min-height: 0; overflow: hidden; }
  .rows { flex: 1; }
  .row {
    display: flex;
    align-items: center;
    height: 24px;
    padding-left: 16px;
  }
  .row label, .check { display: flex; align-items: center; gap: 5px; }
  .row.level1 { padding-left: 27px; }
  .row.level2 { padding-left: 41px; background: linear-gradient(#888, #888) 41px 0 / 1px 24px no-repeat, linear-gradient(#888, #888) 41px 11px / 6px 1px no-repeat; }
  .row.level2.last { background-size: 1px 12px, 6px 1px; }
  .row.level2 .exp { margin-left: 10px; }
  .exp { width: 5px; height: 9px; margin-right: 4px; }
  .exp.closed { border: 4px solid transparent; border-left: 5px solid #aaa; border-right: 0; }
  .exp.open { width: 7px; height: 7px; margin: 0 4px 0 -2px; border: 3px solid #555; border-top-color: transparent; border-left-color: transparent; }
  input[type='checkbox'] {
    appearance: none;
    position: relative;
    flex: none;
    width: 14px;
    height: 14px;
    margin: 0;
    background: #fff;
    border: 1px solid #777;
  }
  input[type='checkbox']:checked::after {
    content: '';
    position: absolute;
    left: 4px;
    top: 1px;
    width: 5px;
    height: 9px;
    border: solid #666;
    border-width: 0 2px 2px 0;
    transform: rotate(38deg);
  }
  input.dim { border-color: #bbb; border-bottom-width: 2px; background: #fafafa; }
  input.dim:checked::after { border-color: #bbb; }
  .tree-scroll { width: 8px; margin-right: 2px; display: flex; flex-direction: column; gap: 2px; padding-bottom: 3px; }
  .tree-scroll div { flex: 1; background: #dedede; display: grid; grid-template-rows: 91fr 165fr 156fr; }
  .tree-scroll b { grid-row: 2; background: #777; }
  .tree-scroll i { border: 4px solid transparent; }
  .tree-scroll .up { border-top: 0; border-bottom: 6px solid #888; }
  .tree-scroll .down { border-bottom: 0; border-top: 6px solid #888; }

  .mapview { flex: 1; min-width: 0; display: flex; flex-direction: column; }
  .map-tabs {
    display: flex;
    height: 22px;
    border-bottom: 2px solid #0078d0;
    color: #222;
  }
  .map-tabs button { gap: 5px; padding: 0 6px; height: 22px; }
  .map-tabs .current { background: #0078d0; color: #fff; padding-right: 4px; }
  .map-tabs .current span { margin-left: 4px; }
  .map-tabs > i { margin: 10px 4px 0 auto; height: 4px; }
  .map-frame {
    flex: 1;
    min-height: 0;
    display: flex;
    flex-direction: column;
    background: #f7f9f9;
    border: 1px solid #ccc;
  }
  .preview { flex: 1; min-height: 0; display: flex; flex-direction: column; justify-content: center; }
  .preview svg { display: block; width: 100%; background: #fff; }
  .area { fill: #faf5d3; stroke: #555; stroke-width: 2.4; stroke-linejoin: round; }
  .border { fill: none; stroke: #555; stroke-width: 2.4; stroke-linejoin: round; }
  text { fill: #000; }
  .serif {
    font-family: 'Liberation Serif', serif;
    font-size: 17px;
    font-weight: 700;
    letter-spacing: 3px;
    text-anchor: middle;
  }
  .sans {
    font-family: 'Open Sans', sans-serif;
    font-weight: 700;
    font-size: 18px;
    letter-spacing: 2px;
    text-anchor: middle;
  }
  .map-status {
    display: flex;
    align-items: center;
    height: 24px;
    padding: 0 5px 2px;
    color: #444;
  }
  select {
    appearance: none;
    height: 22px;
    padding: 0 5px;
    background: #fff conic-gradient(from -45deg at 50% 100%, #666 90deg, transparent 0) right 4px center / 6px 3px no-repeat;
    border: 1px solid #999;
    border-radius: 0;
  }
  .map-status select { flex: 0 0 100px; }
  .bar { width: 1px; height: 16px; margin: 0 5px; background: #aaa; }
  .map-status button { width: 22px; height: 22px; }
  .map-status .on { background: #a3d5f4; }
  .coords { flex: 1; display: flex; justify-content: center; align-items: center; gap: 8px; white-space: nowrap; }
  .count { display: flex; align-items: center; gap: 4px; color: #888; }

  .export-col { flex: 0 0 347px; display: flex; flex-direction: column; }
  .export { flex: 1; min-height: 0; }
  .subject { margin-top: 3px; font-size: 15px; line-height: 24px; text-align: center; }
  h4 {
    align-self: flex-start;
    margin: 13px 0 0 5px;
    font-size: 14px;
    line-height: 20px;
    font-weight: 600;
    border-bottom: 2px solid #0078c8;
  }
  .form { padding: 21px 0 0 14px; display: flex; flex-direction: column; align-items: flex-start; }
  h5 { display: flex; align-items: center; gap: 2px; margin-left: -4px; font-size: 14px; line-height: 20px; }
  .form > label { margin: 11px 0 3px; line-height: 16px; }
  .form > select { width: 120px; }
  .form > select + label { margin: 6px 0 3px; }
  .form > input { width: 318px; height: 22px; margin-bottom: 17px; padding: 0 2px; background: #fff; border: 1px solid #999; }
  .form .check { margin: 12px 0 0; line-height: 14px; height: 14px; }
  .form .size { margin: 19px 0 16px -4px; }
  .dims { display: flex; align-items: center; gap: 10px; }
  .dims > button { width: 18px; height: 24px; background: #fff; border: 1px solid #444; }
  .fields { display: grid; grid-template-columns: 54px 100px; row-gap: 3px; line-height: 16px; }
  .fields .px { padding-left: 2px; }
  .spin { display: flex; height: 22px; background: #fff; border: 1px solid #999; align-items: center; padding-right: 5px; }
  .spin input { flex: 1; border: 0; padding: 0 0 0 5px; background: none; }
  .spin i { width: 8px; height: 14px; background: conic-gradient(from 135deg at 50% 0, #000 90deg, transparent 0) 0 0 / 8px 4px no-repeat, conic-gradient(from -45deg at 50% 100%, #000 90deg, transparent 0) 0 100% / 8px 4px no-repeat; }
  .form .check.tight { margin-top: 6px; }
  .done {
    display: flex;
    align-items: center;
    gap: 16px;
    height: 40px;
    margin: auto 4px 13px;
    padding-left: 12px;
    line-height: 15px;
    background: #e3efe3;
  }
  .done a { color: #3f8a43; text-decoration: none; }
  .pane-tabs { display: flex; gap: 15px; height: 21px; padding-left: 6px; }

  /* Inkscape window */
  .inkscape {
    position: absolute;
    inset: 181px 23px 20px 1143px;
    display: flex;
    flex-direction: column;
    background: #f6f5f4;
    border: 1px solid #555;
    box-shadow: 0 3px 14px rgba(0, 0, 0, 0.45);
    color: #2e3436;
  }
  .defs { position: absolute; }
  .ink-title {
    display: flex;
    align-items: center;
    flex: 0 0 30px;
    gap: 4px;
    padding: 0 2px 0 8px;
    background: #fff;
    color: #000;
  }
  .ink-title span { flex: 1; }
  .ink-title button { width: 42px; height: 30px; }
  .menu {
    display: flex;
    flex: 0 0 24px;
    gap: 14px;
    padding-left: 8px;
    border-bottom: 1px solid #d8d5d2;
    font-family: 'Open Sans', sans-serif;
  }
  .controls {
    display: flex;
    align-items: center;
    flex: 0 0 42px;
    padding-left: 4px;
  }
  .controls > button { width: 37px; height: 34px; }
  .vsep { width: 1px; height: 33px; margin: 0 6px; background: #d5d2cf; }
  .controls .caret { margin: 0 15px 0 auto; }
  .controls label { margin: 0 4px; color: #999; }
  .controls, .ink-status { font-size: 13px; }
  .number {
    display: flex;
    width: 116px;
    height: 33px;
    background: #fff;
    border: 1px solid #cdc7c2;
    border-radius: 5px;
    overflow: hidden;
    color: #222;
  }
  .number input { flex: 1; width: 20px; border: 0; padding: 0 2px; background: none; }
  .number button { flex: 0 0 17px; border-left: 1px solid #e2dfdc; font-size: 18px; }
  .number.off, .number.off button { background: #faf9f8; color: #999; }
  .number.off button { color: #c5c3c1; }

  .studio { flex: 1; min-height: 0; display: flex; }
  .toolbox { flex: 0 0 52px; padding: 3px 5px 0 4px; display: flex; flex-direction: column; }
  .toolbox button { height: 34px; flex: none; border-radius: 5px; }
  .on { background: #d5d0cc; }
  .toolbox .on, .column .on { border: 1px solid #cdc7c2; }
  .toolbox .type { color: #000; }
  .type b { font-family: 'Open Sans', sans-serif; font-size: 26px; font-weight: 800; }
  hr { width: 100%; height: 1px; flex: none; margin: 7px 0 6px; border: 0; background: #d8d5d2; }
  .more { margin: auto auto 15px; border: 5px solid transparent; border-left: 5px solid #2e3436; border-right: 0; }
  .more.back { border-left: 0; border-right: 5px solid #2e3436; margin: 11px 15px auto auto; }
  .stage {
    flex: 1;
    min-width: 0;
    display: grid;
    grid-template-columns: 18px minmax(0, 1fr) 19px;
    grid-template-rows: 18px minmax(0, 1fr) 18px;
  }
  .guides, .fit { border: 1px solid #d0ccc8; border-radius: 4px; background: #f9f8f7; }
  .fit { font-size: 11px; margin: 0 2px; color: #888; }
  .hruler { width: 100%; height: 18px; border-bottom: 1px solid #2e3436; }
  .vruler { height: 100%; border-right: 1px solid #2e3436; }
  .hruler text, .vruler text { font-size: 10px; fill: #2e3436; }
  .canvas { display: block; width: 100%; height: 100%; background: #fff; }
  .vscroll, .hscroll { display: grid; background: #cfcfcf; }
  .vscroll { grid-template-rows: 101fr 249fr 98fr; }
  .vscroll i { grid-row: 2; margin: 0 6px 0 7px; background: #7f8282; border-radius: 3px; }
  .hscroll { grid-column: 2; grid-template-columns: 167fr 195fr 167fr; }
  .hscroll i { grid-column: 2; margin: 6px 0; background: #7f8282; border-radius: 3px; }
  .cms { padding: 2px; background: #f3f2f1; border: 1px solid #d0ccc8; border-radius: 4px; }
  .cms i { display: block; width: 13px; height: 13px; opacity: 0.45; clip-path: polygon(10% 0, 100% 70%, 20% 100%); background: conic-gradient(#8f8, #8ff, #f9f, #f88, #8f8); }
  .column { flex: 0 0 45px; padding: 4px 5px 0; display: flex; flex-direction: column; }
  .column button { height: 34px; flex: none; margin-bottom: 1px; border-radius: 5px; }

  .colors { display: flex; flex: 0 0 34px; }
  .strip { flex: 1; min-width: 0; }
  .swatches { display: flex; height: 21px; overflow: hidden; }
  .swatches button { flex: 0 0 19px; }
  .swatches .none { background: #fff; }
  .colors .more { margin-left: 16px; }
  .strip-scroll { height: 13px; padding: 4px 3px; background: #cfcfcf; }
  .strip-scroll i { display: block; width: 49px; height: 6px; background: #7f8282; border-radius: 3px; }

  .ink-status { display: flex; align-items: center; flex: 0 0 34px; }
  .paint, .pointer { display: grid; grid-template-columns: 40px 22px; line-height: 17px; padding-left: 2px; }
  .paint { font-size: 12px; }
  .ink-status label { margin: 0 3px 0 2px; }
  .ink-status .vsep { margin: 0 9px 0 42px; }
  .ink-status .vsep.near { margin: 0 10px 0 0; }
  .number.small { width: 67px; }
  .flat { width: 36px; }
  .layer { width: 69px; height: 33px; flex: none; gap: 5px; font-size: 11px; background: linear-gradient(#f8f8f7, #e9e7e5); border: 1px solid #cdc7c2; border-radius: 5px; }
  .ink-status p { width: 36px; padding-left: 4px; line-height: 17px; }
  .pointer { grid-template-columns: 22px 41px; padding: 0; margin-right: 7px; }
  .pointer span:nth-child(even) { text-align: right; }
  .number.zoom { width: 93px; margin: 0 8px 0 6px; }
  .number.rotate { width: 101px; margin-left: 6px; }
  .zoom input, .rotate input { text-align: center; padding: 0; }
  .zoom button, .rotate button { flex-basis: 21px; }
</style>
